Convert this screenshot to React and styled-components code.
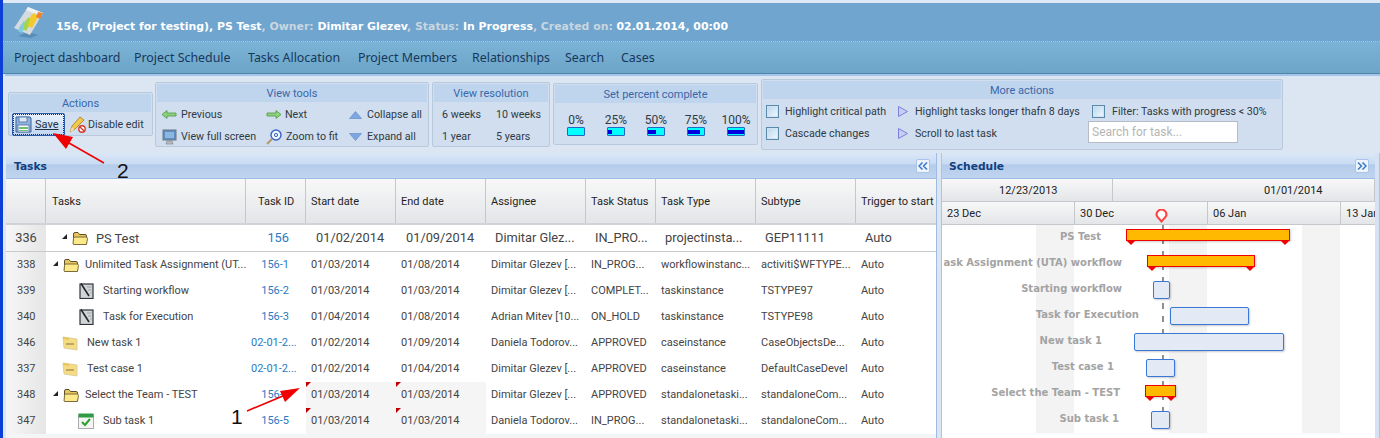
import React from 'react';
import styled, { createGlobalStyle } from 'styled-components';

const GlobalStyle = createGlobalStyle`
  html, body { margin: 0; padding: 0; }
  body {
    width: 1380px;
    height: 438px;
    overflow: hidden;
    background: #dfe8f6;
    font-family: Roboto, "Noto Sans", "DejaVu Sans", sans-serif;
    font-size: 11px;
    color: #333;
  }
`;

const columns = '40px 200px 60px 90px 90px 100px 70px 100px 100px 80px';

const Page = styled.div`
  position: relative;
  display: flex;
  width: 1380px;
  height: 438px;
  overflow: hidden;
`;

const WindowEdge = styled.div`
  flex: 0 0 3px;
  background: #0b3fd8;
`;

const Main = styled.div`
  flex: 1;
  display: flex;
  flex-direction: column;
  min-width: 0;
`;

const Header = styled.header`
  height: 39px;
  margin-top: 3px;
  border-top: 1px dotted #8a9aa6;
  border-bottom: 1px dotted #a9cbe2;
  box-sizing: border-box;
  background: #6fa5cf;
  display: flex;
  align-items: center;
  padding-left: 11px;
  gap: 12px;
  font-family: "DejaVu Sans", sans-serif;
  font-size: 10.9px;
  font-weight: bold;
  color: #fff;
  white-space: nowrap;
`;

const HeaderText = styled.span`
  padding-top: 8px;
`;

const Muted = styled.span`
  color: #c9d6df;
`;

const Nav = styled.nav`
  height: 32px;
  box-sizing: border-box;
  background: linear-gradient(#7ab3d6, #6da5c9);
  border-bottom: 1px solid #4f86a8;
  display: grid;
  grid-template-columns: 120px 114px 110px 114px 93px 56px 50px;
  align-items: center;
  padding-left: 11px;
  font-family: "Noto Sans", sans-serif;
  font-size: 12.4px;
  color: #17375a;
  white-space: nowrap;
`;

const Toolbar = styled.div`
  height: 79px;
  box-sizing: border-box;
  border-top: 2px solid #a5c4ec;
  margin-left: 2px;
  padding: 0 0 1px 3px;
  background: #dce6f3;
  display: flex;
  align-items: center;
  gap: 2px;
`;

const Group = styled.section`
  box-sizing: border-box;
  width: ${p => p.$w}px;
  height: ${p => p.$h}px;
  margin-left: ${p => p.$ml || 0}px;
  background: #d0deef;
  border: 1px solid #b9c9dc;
  border-radius: 2px;
  padding: 1px;
  flex: none;
`;

const GroupTitle = styled.div`
  height: 18px;
  background: #bfd5ee;
  color: #3a67a8;
  font-size: 11px;
  line-height: 20px;
  text-align: center;
`;

const ToolGrid = styled.div`
  display: grid;
  grid-template-columns: ${p => p.$cols};
  grid-auto-rows: 22px;
  padding: ${p => p.$pad || '0'};
  align-items: center;
`;

const Tool = styled.div`
  display: flex;
  align-items: center;
  gap: ${p => p.$gap ?? 4}px;
  white-space: nowrap;
  font-size: 10.7px;
  color: #2f3a45;
`;

const SaveButton = styled.div`
  display: flex;
  align-items: center;
  gap: 3px;
  width: 53px;
  height: 23px;
  box-sizing: border-box;
  border: 1px solid #2a5aa8;
  outline: 1px dotted #1c2f55;
  outline-offset: -2px;
  border-radius: 2px;
  background: linear-gradient(#e9f2fc, #bfd6f2);
  padding-left: 2px;
  text-decoration: underline;
  color: #22303f;
  font-size: 11px;
`;

const ActionRow = styled.div`
  display: flex;
  align-items: center;
  gap: 4px;
  padding: 1px 0 0 2px;
`;

const PercentRow = styled.div`
  display: grid;
  grid-template-columns: repeat(5, 40px);
  padding: 11px 0 0 1px;
`;

const Percent = styled.div`
  display: flex;
  flex-direction: column;
  align-items: center;
  font-size: 12px;
  line-height: 13px;
  color: #2f3a45;
`;

const PercentBar = styled.div`
  box-sizing: border-box;
  width: 18px;
  height: 9px;
  background: #00ffff;
  border: 1px solid #2268c0;
  border-radius: 1px;
  display: flex;
  align-items: center;
`;

const PercentFill = styled.div`
  height: 4px;
  background: #0000e0;
`;

const CheckBox = styled.span`
  display: inline-block;
  flex: none;
  box-sizing: border-box;
  width: 13px;
  height: 13px;
  border: 1px solid #5a8aa8;
  background: linear-gradient(135deg, #b8d6ee, #f2f8fd);
  box-shadow: inset 0 0 0 1px #cfe3f4;
`;

const SearchInput = styled.div`
  box-sizing: border-box;
  width: 150px;
  height: 22px;
  margin: -4px 0 0 -4px;
  background: #fff;
  border: 1px solid #b4bcc8;
  color: #b5b5b5;
  font-size: 12px;
  line-height: 20px;
  padding-left: 3px;
`;

const Panels = styled.div`
  flex: 1;
  display: flex;
  margin-left: 3px;
  min-height: 0;
`;

const TasksPanel = styled.div`
  flex: 0 0 930px;
  border-right: 1px solid #9dbde6;
  box-sizing: border-box;
  background: #f4f5f7;
`;

const Splitter = styled.div`
  flex: 0 0 5px;
  box-sizing: border-box;
  background: #dce6f3;
  border-right: 1px solid #a9c4e8;
`;

const SchedulePanel = styled.div`
  flex: 0 0 433px;
  background: #fff;
  display: flex;
  flex-direction: column;
  min-width: 0;
`;

const PanelHeader = styled.div`
  height: 26px;
  box-sizing: border-box;
  display: flex;
  align-items: center;
  justify-content: space-between;
  padding: 1px 6px 0 ${p => p.$pl || 8}px;
  background: linear-gradient(#dbe7f7 0, #c9dcf3 42%, #b4cceb 48%, #c0d4ef 100%);
  border-bottom: 1px solid #9dbde6;
  font-family: "DejaVu Sans", sans-serif;
  font-weight: bold;
  font-size: 10.7px;
  color: #123f80;
`;

const CollapseButton = styled.span`
  width: 14px;
  height: 14px;
  box-sizing: border-box;
  background: #eef4fc;
  border: 1px solid #a9c4e8;
  border-radius: 2px;
  display: flex;
  align-items: center;
  justify-content: center;
`;

const HeadRow = styled.div`
  display: grid;
  grid-template-columns: ${columns};
  height: 46px;
  box-sizing: border-box;
  border-bottom: 2px solid #cfd3d8;
  background: linear-gradient(#f8f8f8, #e3e5e8);
`;

const HeadCell = styled.div`
  border-left: ${p => (p.$first ? 'none' : '1px solid #c4c8cc')};
  padding: 13px 0 0 ${p => p.$pl ?? 5}px;
  margin-left: ${p => (p.$first ? 0 : -1)}px;
  line-height: 20px;
  font-size: 11px;
  color: #1f1f1f;
  white-space: nowrap;
  overflow: hidden;
`;

const RootRow = styled.div`
  display: grid;
  grid-template-columns: ${columns};
  height: 27px;
  box-sizing: border-box;
  background: #fff;
  border-bottom: 1px solid #c6cbd0;
  font-size: 12.8px;
  line-height: 25px;
  color: #444;
`;

const Row = styled.div`
  display: grid;
  grid-template-columns: ${columns};
  height: 26px;
  background: #fff;
  font-size: 11px;
  line-height: 26px;
  color: #444;
`;

const NumCell = styled.div`
  background: linear-gradient(90deg, #f6f6f6, #e6e6e6);
  text-align: ${p => (p.$big ? 'center' : 'left')};
  padding-left: ${p => (p.$big ? 0 : 11)}px;
`;

const Cell = styled.div`
  position: relative;
  padding-left: ${p => p.$pl ?? 5}px;
  white-space: nowrap;
  overflow: hidden;
  background: ${p => (p.$shade ? '#f5f5f5' : 'transparent')};
`;

const TreeCell = styled.div`
  display: flex;
  align-items: center;
  height: ${p => p.$h ?? 26}px;
  padding-left: ${p => p.$pl}px;
  white-space: nowrap;
  overflow: hidden;
`;

const TreeToggle = styled.span`
  flex: none;
  width: 0;
  height: 0;
  border-left: 5px solid transparent;
  border-bottom: 5px solid #222;
  margin-right: 5px;
  margin-top: -4px;
`;

const TreeLabel = styled.span`
  margin-left: ${p => p.$ml}px;
`;

const IdCell = styled(Cell)`
  color: #2a7ac4;
  text-align: ${p => (p.$left ? 'left' : 'right')};
  padding-left: ${p => (p.$left ? 5 : 0)}px;
  padding-right: ${p => (p.$left ? 0 : p.$pr ?? 17)}px;
`;

const CommentMark = styled.span`
  position: absolute;
  left: 0;
  top: 0;
  width: 0;
  height: 0;
  border-top: 5px solid #c00000;
  border-right: 5px solid transparent;
`;

const TimeHeadRow = styled.div`
  display: flex;
  height: ${p => p.$h}px;
  box-sizing: border-box;
  border-bottom: 1px solid #c4c8cc;
  background: linear-gradient(#f8f8f8, #e3e5e8);
  overflow: hidden;
  flex: none;
`;

const TimeCell = styled.div`
  flex: 0 0 ${p => p.$w}px;
  box-sizing: border-box;
  border-right: 1px solid #c4c8cc;
  padding-left: ${p => p.$pl ?? 5}px;
  font-size: 11px;
  line-height: 23px;
  color: #222;
  white-space: nowrap;
`;

const Chart = styled.div`
  position: relative;
  flex: 1;
  background: #fff;
  overflow: hidden;
`;

const Weekend = styled.div`
  position: absolute;
  top: 0;
  height: 208px;
  left: ${p => p.$x}px;
  width: ${p => p.$w}px;
  background: #f3f3f3;
`;

const TodayLine = styled.div`
  position: absolute;
  left: 220px;
  top: 0;
  height: 208px;
  width: 2px;
  background: repeating-linear-gradient(#8f8f8f 0 6px, transparent 6px 13px);
`;

const TodayPin = styled.svg`
  position: absolute;
  left: 1155px;
  top: 209px;
`;

const BarLabel = styled.div`
  position: absolute;
  right: ${p => p.$r}px;
  top: ${p => p.$y}px;
  font-family: "DejaVu Sans", sans-serif;
  font-weight: bold;
  font-size: 10px;
  line-height: 14px;
  color: #a3a3a3;
  white-space: nowrap;
`;

const TaskBar = styled.div`
  position: absolute;
  box-sizing: border-box;
  left: ${p => p.$x}px;
  top: ${p => p.$y}px;
  width: ${p => p.$w}px;
  height: 18px;
  background: #e3eaf5;
  border: 1px solid #3a78d8;
  border-radius: 2px;
  box-shadow: 1px 1px 2px rgba(0, 0, 0, 0.2);
`;

const SummaryBar = styled.div`
  position: absolute;
  box-sizing: border-box;
  left: ${p => p.$x}px;
  top: ${p => p.$y}px;
  width: ${p => p.$w}px;
  height: 12px;
  background: #ffb900;
  border: 1px solid #f00000;
  box-shadow: 1px 1px 2px rgba(0, 0, 0, 0.2);
`;

const SummaryTip = styled.span`
  position: absolute;
  top: 10px;
  ${p => (p.$end ? 'right: -1px;' : 'left: -1px;')}
  width: 0;
  height: 0;
  border-left: 5.5px solid transparent;
  border-right: 5.5px solid transparent;
  border-top: 5px solid #f00000;
`;

const ScrollEdge = styled.div`
  flex: none;
  width: 5px;
  background: #d5e2f3;
  border-right: 1px solid #a9c4e8;
  box-sizing: border-box;
`;

const Callout = styled.span`
  position: absolute;
  left: ${p => p.$x}px;
  top: ${p => p.$y}px;
  font-family: "Liberation Sans", Arial, sans-serif;
  font-size: 21px;
  line-height: 21px;
  color: #111;
`;

const ArrowLayer = styled.svg`
  position: absolute;
  left: 0;
  top: 0;
`;

const AppLogo = () => (
  <svg width="30" height="33" viewBox="0 0 30 33">
    <path d="M4 30 L16 32 L24 29 L14 26 Z" fill="#4f82a8" opacity="0.7" />
    <path d="M0 22 L14 1 L29 7 L16 29 Z" fill="#d5dade" />
    <path d="M14 1 L29 7 L27 10 L12 4 Z" fill="#eef1f3" />
    <path d="M6 20 L10 15 L12 19 L8 27 L4 25 Z" fill="#7fcbe0" />
    <path d="M11 15 L15 11 L18 15 L12 25 L9 23 Z" fill="#a5d64a" />
    <path d="M17 9 L21 7 L24 11 L18 22 L14 20 Z" fill="#f3c92c" />
    <path d="M24 6 L29 7 L26 13 L22 11 Z" fill="#ee8432" />
  </svg>
);

const SaveIcon = () => (
  <svg width="17" height="17" viewBox="0 0 17 17">
    <path d="M1 1 H15 L16 2 V16 H1 Z" fill="#8fb4e0" stroke="#3d5f96" />
    <rect x="4" y="1" width="8" height="5" fill="#dfe8f5" stroke="#5f7fb0" />
    <rect x="3" y="9" width="11" height="7" fill="#fff" stroke="#5f7fb0" />
    <rect x="4" y="11" width="9" height="2" fill="#6cc070" />
    <rect x="4" y="14" width="9" height="1" fill="#6cc070" />
  </svg>
);

const PencilIcon = () => (
  <svg width="17" height="17" viewBox="0 0 17 17">
    <path d="M1 16 L3 10 L11 1 L15 4 L6 13 Z" fill="#f2c84b" stroke="#a07c20" strokeWidth="0.8" />
    <path d="M1 16 L3 11 L5 14 Z" fill="#f5e3b8" />
    <circle cx="13" cy="13" r="3.2" fill="#fff" stroke="#d23a2a" strokeWidth="1.4" />
    <path d="M11 11 L15 15" stroke="#d23a2a" strokeWidth="1.3" />
  </svg>
);

const ArrowIcon = ({ dir }) => (
  <svg width="15" height="9" viewBox="0 0 15 9">
    <g transform={dir === 'left' ? undefined : 'translate(15 0) scale(-1 1)'}>
      <path d="M0 4.5 L5 0.5 V3 H14 V6 H5 V8.5 Z" fill="#8fd07e" stroke="#4b9a43" strokeWidth="0.8" />
    </g>
  </svg>
);

const ScreenIcon = () => (
  <svg width="15" height="16" viewBox="0 0 15 16">
    <rect x="1" y="1" width="13" height="10" fill="#5d8fc4" stroke="#6f7780" />
    <rect x="3" y="3" width="9" height="6" fill="#8db6e0" />
    <path d="M5 12 H10 L11 15 H4 Z" fill="#b8bcc2" stroke="#7d8288" strokeWidth="0.6" />
  </svg>
);

const ZoomFitIcon = () => (
  <svg width="16" height="16" viewBox="0 0 16 16">
    <circle cx="10" cy="6" r="5" fill="#eef4fc" stroke="#3a62c0" strokeWidth="1.4" />
    <circle cx="10" cy="6" r="1.6" fill="none" stroke="#3a62c0" />
    <path d="M6 10 L1 15" stroke="#b59a6a" strokeWidth="2" />
  </svg>
);

const TriangleIcon = ({ up }) => (
  <svg width="13" height="8" viewBox="0 0 13 8">
    <path d={up ? 'M6.5 0.5 L12.5 7.5 H0.5 Z' : 'M0.5 0.5 H12.5 L6.5 7.5 Z'} fill="#7ea6e0" stroke="#5c86c8" strokeWidth="0.6" />
  </svg>
);

const PlayIcon = () => (
  <svg width="10" height="11" viewBox="0 0 10 11">
    <path d="M0.5 0.5 L9.5 5.5 L0.5 10.5 Z" fill="#c9ccf4" stroke="#7d80d8" />
  </svg>
);

const FolderIcon = () => (
  <svg width="16" height="16" viewBox="0 0 16 16" style={{ flex: 'none' }}>
    <path d="M1.5 14 V4 Q1.5 2.5 3 2.5 H6 L7.5 4.5 H13 Q14.5 4.5 14.5 6 V14 Z" fill="#e8c65a" stroke="#5a5030" strokeWidth="1" />
    <path d="M1 14 L1.5 8.5 Q1.5 7 3 7 H14 Q15.5 7 15.5 8.5 L14.5 14.5 H2 Z" fill="#fbe98a" stroke="#7c6c3c" strokeWidth="1" />
  </svg>
);

const CaseIcon = () => (
  <svg width="16" height="16" viewBox="0 0 16 16" style={{ flex: 'none' }}>
    <path d="M1 2 L15 4 V15 L2 13 Z" fill="#f5dc82" stroke="#dccb98" strokeWidth="0.9" />
    <path d="M1 2 L7 3 V5 L1 4 Z" fill="#e8c65a" />
    <rect x="4" y="8" width="8" height="2" fill="#bca560" />
  </svg>
);

const NoteIcon = () => (
  <svg width="15" height="16" viewBox="0 0 15 16" style={{ flex: 'none' }}>
    <rect x="1" y="1" width="13" height="14.5" fill="#d2d4d6" stroke="#2f353b" strokeWidth="1.2" />
    <path d="M2 0.5 L10 13" stroke="#23282d" strokeWidth="1.6" />
    <path d="M8 4 H12.5 M9 7 H12.5 M11 10 H12.5" stroke="#9ea3a8" />
  </svg>
);

const CheckIcon = () => (
  <svg width="16" height="16" viewBox="0 0 16 16" style={{ flex: 'none' }}>
    <rect x="0.5" y="2" width="15" height="13.5" fill="#f4f4f4" stroke="#a9adb0" />
    <rect x="0.5" y="0.5" width="15" height="4" fill="#2f9c45" />
    <path d="M4 9 L7 12 L12 6" fill="none" stroke="#2ca02c" strokeWidth="2" />
  </svg>
);

const DoubleChevron = ({ dir }) => (
  <svg width="10" height="8" viewBox="0 0 10 8">
    <path
      d={dir === 'left' ? 'M4.5 0.5 L1 4 L4.5 7.5 M9 0.5 L5.5 4 L9 7.5' : 'M1 0.5 L4.5 4 L1 7.5 M5.5 0.5 L9 4 L5.5 7.5'}
      fill="none"
      stroke="#3a78c8"
      strokeWidth="1.5"
    />
  </svg>
);

const navItems = ['Project dashboard', 'Project Schedule', 'Tasks Allocation', 'Project Members', 'Relationships', 'Search', 'Cases'];
const headNames = [['Tasks', 6], ['Task ID', 12], ['Start date', 5], ['End date', 5], ['Assignee', 5], ['Task Status', 5], ['Task Type', 5], ['Subtype', 5], ['Trigger to start', 5]];
const percents = [['0%', 0], ['25%', 4], ['50%', 8], ['75%', 12], ['100%', 16]];

const rows = [
  { num: 338, name: 'Unlimited Task Assignment (UT...', icon: 'folder', toggle: true, pl: 2, ml: 6, id: '156-1', start: '01/03/2014', end: '01/08/2014', who: 'Dimitar Glezev [...', status: 'IN_PROG...', type: 'workflowinstanc...', sub: 'activiti$WFTYPE...' },
  { num: 339, name: 'Starting workflow', icon: 'note', pl: 33, ml: 9, id: '156-2', start: '01/03/2014', end: '01/03/2014', who: 'Dimitar Glezev [...', status: 'COMPLET...', type: 'taskinstance', sub: 'TSTYPE97' },
  { num: 340, name: 'Task for Execution', icon: 'note', pl: 33, ml: 9, id: '156-3', start: '01/04/2014', end: '01/08/2014', who: 'Adrian Mitev [10...', status: 'ON_HOLD', type: 'taskinstance', sub: 'TSTYPE98' },
  { num: 346, name: 'New task 1', icon: 'case', pl: 16, ml: 9, id: '02-01-2...', start: '01/02/2014', end: '01/09/2014', who: 'Daniela Todorov...', status: 'APPROVED', type: 'caseinstance', sub: 'CaseObjectsDe...' },
  { num: 337, name: 'Test case 1', icon: 'case', pl: 16, ml: 9, id: '02-01-2...', start: '01/02/2014', end: '01/04/2014', who: 'Dimitar Glezev [...', status: 'APPROVED', type: 'caseinstance', sub: 'DefaultCaseDevel' },
  { num: 348, name: 'Select the Team - TEST', icon: 'folder', toggle: true, pl: 2, ml: 6, id: '156-4', start: '01/03/2014', end: '01/03/2014', who: 'Dimitar Glezev [...', status: 'APPROVED', type: 'standalonetaski...', sub: 'standaloneCom...', marked: true },
  { num: 347, name: 'Sub task 1', icon: 'check', pl: 32, ml: 9, id: '156-5', start: '01/03/2014', end: '01/03/2014', who: 'Daniela Todorov...', status: 'IN_PROG...', type: 'standalonetaski...', sub: 'standaloneCom...', marked: true },
];

const rowIcons = { folder: FolderIcon, note: NoteIcon, case: CaseIcon, check: CheckIcon };

const summaries = [
  { x: 184, y: 4, w: 164 },
  { x: 205, y: 30, w: 108 },
  { x: 203, y: 160, w: 31 },
];
const tasks = [
  { x: 211, y: 56, w: 17 },
  { x: 228, y: 82, w: 79 },
  { x: 192, y: 108, w: 150 },
  { x: 204, y: 134, w: 29 },
  { x: 209, y: 186, w: 19 },
];
const labels = [
  { text: 'PS Test', r: 274, y: 5 },
  { text: 'ask Assignment (UTA) workflow', r: 253, y: 31 },
  { text: 'Starting workflow', r: 253, y: 57 },
  { text: 'Task for Execution', r: 236, y: 83 },
  { text: 'New task 1', r: 273, y: 109 },
  { text: 'Test case 1', r: 261, y: 135 },
  { text: 'Select the Team - TEST', r: 255, y: 161 },
  { text: 'Sub task 1', r: 256, y: 187 },
];

const App = () => (
  <Page>
    <GlobalStyle />
    <WindowEdge />
    <Main>
      <Header>
        <AppLogo />
        <HeaderText>
          156, (Project for testing), PS Test<Muted>, Owner: </Muted>Dimitar Glezev<Muted>, Status: </Muted>In Progress<Muted>, Created on: </Muted>02.01.2014, 00:00
        </HeaderText>
      </Header>
      <Nav>
        {navItems.map(item => (
          <span key={item}>{item}</span>
        ))}
      </Nav>
      <Toolbar>
        <Group $w={145} $h={44}>
          <GroupTitle>Actions</GroupTitle>
          <ActionRow>
            <SaveButton><SaveIcon />Save</SaveButton>
            <Tool $gap={2}><PencilIcon />Disable edit</Tool>
          </ActionRow>
        </Group>
        <Group $w={274} $h={65}>
          <GroupTitle>View tools</GroupTitle>
          <ToolGrid $cols="104px 83px 80px" $pad="2px 0 0 5px">
            <Tool><ArrowIcon dir="left" />Previous</Tool>
            <Tool><ArrowIcon dir="right" />Next</Tool>
            <Tool $gap={5}><TriangleIcon up />Collapse all</Tool>
            <Tool><ScreenIcon />View full screen</Tool>
            <Tool><ZoomFitIcon />Zoom to fit</Tool>
            <Tool $gap={5}><TriangleIcon />Expand all</Tool>
          </ToolGrid>
        </Group>
        <Group $w={118} $h={65} $ml={1}>
          <GroupTitle>View resolution</GroupTitle>
          <ToolGrid $cols="54px 60px" $pad="2px 0 0 8px">
            <Tool>6 weeks</Tool>
            <Tool>10 weeks</Tool>
            <Tool>1 year</Tool>
            <Tool>5 years</Tool>
          </ToolGrid>
        </Group>
        <Group $w={205} $h={62} $ml={1}>
          <GroupTitle>Set percent complete</GroupTitle>
          <PercentRow>
            {percents.map(([label, fill]) => (
              <Percent key={label}>
                {label}
                <PercentBar><PercentFill style={{ width: fill }} /></PercentBar>
              </Percent>
            ))}
          </PercentRow>
        </Group>
        <Group $w={522} $h={71} $ml={1}>
          <GroupTitle>More actions</GroupTitle>
          <ToolGrid $cols="132px 194px 190px" $pad="2px 0 0 3px">
            <Tool $gap={6}><CheckBox />Highlight critical path</Tool>
            <Tool $gap={7}><PlayIcon />Highlight tasks longer thafn 8 days</Tool>
            <Tool $gap={7}><CheckBox />Filter: Tasks with progress &lt; 30%</Tool>
            <Tool $gap={6}><CheckBox />Cascade changes</Tool>
            <Tool $gap={7}><PlayIcon />Scroll to last task</Tool>
            <SearchInput>Search for task...</SearchInput>
          </ToolGrid>
        </Group>
      </Toolbar>
      <Panels>
        <TasksPanel>
          <PanelHeader>
            Tasks
            <CollapseButton><DoubleChevron dir="left" /></CollapseButton>
          </PanelHeader>
          <HeadRow>
            <HeadCell $first />
            {headNames.map(([name, pl]) => (
              <HeadCell key={name} $pl={pl}>{name}</HeadCell>
            ))}
          </HeadRow>
          <RootRow>
            <NumCell $big>336</NumCell>
            <TreeCell $pl={16} $h={26}>
              <TreeToggle />
              <FolderIcon />
              <TreeLabel $ml={8}>PS Test</TreeLabel>
            </TreeCell>
            <IdCell $pr={17}>156</IdCell>
            <Cell $pl={10}>01/02/2014</Cell>
            <Cell $pl={10}>01/09/2014</Cell>
            <Cell $pl={9}>Dimitar Glez...</Cell>
            <Cell $pl={9}>IN_PRO...</Cell>
            <Cell $pl={9}>projectinsta...</Cell>
            <Cell $pl={9}>GEP11111</Cell>
            <Cell $pl={9}>Auto</Cell>
          </RootRow>
          {rows.map(row => {
            const Icon = rowIcons[row.icon];
            return (
              <Row key={row.num}>
                <NumCell>{row.num}</NumCell>
                <TreeCell $pl={row.pl + (row.toggle ? 5 : 0)}>
                  {row.toggle && <TreeToggle />}
                  <Icon />
                  <TreeLabel $ml={row.ml}>{row.name}</TreeLabel>
                </TreeCell>
                <IdCell $left={row.id.length > 6}>{row.id}</IdCell>
                <Cell $shade={row.marked}>{row.marked && <CommentMark />}{row.start}</Cell>
                <Cell $shade={row.marked}>{row.marked && <CommentMark />}{row.end}</Cell>
                <Cell>{row.who}</Cell>
                <Cell>{row.status}</Cell>
                <Cell>{row.type}</Cell>
                <Cell>{row.sub}</Cell>
                <Cell>Auto</Cell>
              </Row>
            );
          })}
        </TasksPanel>
        <Splitter />
        <SchedulePanel>
          <PanelHeader $pl={7}>
            Schedule
            <CollapseButton><DoubleChevron dir="right" /></CollapseButton>
          </PanelHeader>
          <TimeHeadRow $h={23}>
            <TimeCell $w={171} $pl={57}>12/23/2013</TimeCell>
            <TimeCell $w={262} $pl={151}>01/01/2014</TimeCell>
          </TimeHeadRow>
          <TimeHeadRow $h={23}>
            <TimeCell $w={133}>23 Dec</TimeCell>
            <TimeCell $w={133}>30 Dec</TimeCell>
            <TimeCell $w={133}>06 Jan</TimeCell>
            <TimeCell $w={133}>13 Jan</TimeCell>
          </TimeHeadRow>
          <Chart>
            <Weekend $x={94} $w={38} />
            <Weekend $x={227} $w={38} />
            <Weekend $x={360} $w={38} />
            <TodayLine />
            {labels.map(label => (
              <BarLabel key={label.text} $r={label.r} $y={label.y}>{label.text}</BarLabel>
            ))}
            {summaries.map(bar => (
              <SummaryBar key={bar.x} $x={bar.x} $y={bar.y} $w={bar.w}>
                <SummaryTip />
                <SummaryTip $end />
              </SummaryBar>
            ))}
            {tasks.map(bar => (
              <TaskBar key={bar.x} $x={bar.x} $y={bar.y} $w={bar.w} />
            ))}
          </Chart>
        </SchedulePanel>
        <ScrollEdge />
      </Panels>
    </Main>
    <TodayPin width="13" height="14" viewBox="0 0 13 14">
      <path d="M6.5 12.5 L2.5 8 A4.8 4.8 0 1 1 10.5 8 Z" fill="#fff" stroke="#ff4040" strokeWidth="2" />
    </TodayPin>
    <ArrowLayer width="1380" height="438" viewBox="0 0 1380 438">
      <path d="M247 411 L290 393" stroke="#f00000" strokeWidth="1.6" />
      <path d="M300 388 L280 391 L285 402 Z" fill="#f00000" />
      <path d="M104 163 L62 139" stroke="#f00000" strokeWidth="1.6" />
      <path d="M53 133 L66 149 L73 137 Z" fill="#f00000" />
    </ArrowLayer>
    <Callout $x={231} $y={406}>1</Callout>
    <Callout $x={117} $y={160}>2</Callout>
  </Page>
);

export default App;
